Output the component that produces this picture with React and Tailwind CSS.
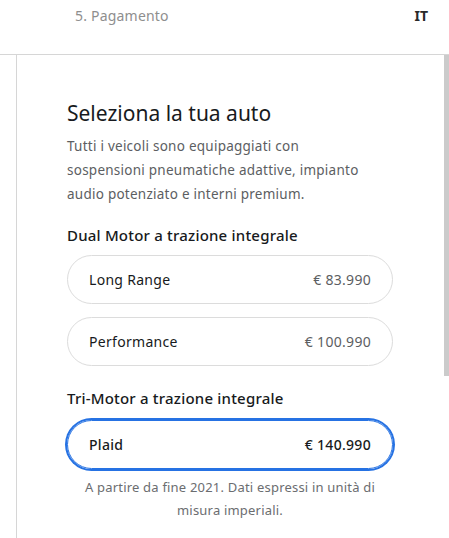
import React, { useState } from "react";

const options = [
  {
    group: "Dual Motor a trazione integrale",
    items: [
      { id: "lr", name: "Long Range", price: "€ 83.990" },
      { id: "perf", name: "Performance", price: "€ 100.990" },
    ],
  },
  {
    group: "Tri-Motor a trazione integrale",
    items: [{ id: "plaid", name: "Plaid", price: "€ 140.990" }],
  },
];

const App = () => {
  const [selected, setSelected] = useState("plaid");

  return (
    <div
      className="w-[449px] h-[538px] overflow-hidden bg-white text-[#171a20]"
      style={{ fontFamily: "'Noto Sans', sans-serif" }}
    >
      {/* Top step bar */}
      <header className="h-[55px] border-b border-[#d6d6d6] flex items-start pt-[6px]">
        <span className="ml-[75px] text-[14px] leading-[20px] text-[#8e8e8e] tracking-[0.2px]">
          5. Pagamento
        </span>
        <span className="ml-auto mr-[21px] text-[14px] leading-[20px] font-bold text-[#2a2a2a]">
          IT
        </span>
      </header>

      <div className="flex h-[483px]">
        <div className="w-[16px] shrink-0" />

        <main className="flex-1 border-l border-[#d6d6d6] pl-[50px] pt-[45px]">
          <div className="w-[326px]">
            <h1 className="text-[21px] leading-[26px] font-normal">
              Seleziona la tua auto
            </h1>
            <p className="mt-[8px] pr-[14px] text-[13.5px] leading-[24px] tracking-[0.25px] text-[#5c5e62]">
              Tutti i veicoli sono equipaggiati con sospensioni pneumatiche
              adattive, impianto audio potenziato e interni premium.
            </p>

            {options.map((section, i) => (
              <section key={section.group} className={i === 0 ? "mt-[19px]" : "mt-[22px]"}>
                <h2 className="text-[15px] leading-[20px] font-medium tracking-[0.2px]">
                  {section.group}
                </h2>
                <div className={`flex flex-col gap-[13px] ${i === 0 ? "mt-[10px]" : "mt-[12px]"}`}>
                  {section.items.map((item) => {
                    const isActive = selected === item.id;
                    return (
                      <button
                        key={item.id}
                        onClick={() => setSelected(item.id)}
                        className={`h-[49px] w-full rounded-full px-[21px] flex items-center justify-between text-[14px] tracking-[0.3px] ${
                          isActive
                            ? "border border-[#2672e3] ring-2 ring-[#2672e3]"
                            : "border border-[#dcdcdc]"
                        }`}
                      >
                        <span className={isActive ? "font-medium" : ""}>{item.name}</span>
                        <span className={isActive ? "font-medium text-[#171a20]" : "text-[#5c5e62]"}>
                          {item.price}
                        </span>
                      </button>
                    );
                  })}
                </div>
              </section>
            ))}

            <p className="mt-[7px] text-center text-[13px] leading-[23px] tracking-[0.2px] text-[#6b6d70] px-[10px]">
              A partire da fine 2021. Dati espressi in unità di misura imperiali.
            </p>
          </div>
        </main>

        <div className="w-[5px] shrink-0">
          <div className="h-[321px] bg-[#cbcbcb]" />
        </div>
      </div>
    </div>
  );
};

export default App;
